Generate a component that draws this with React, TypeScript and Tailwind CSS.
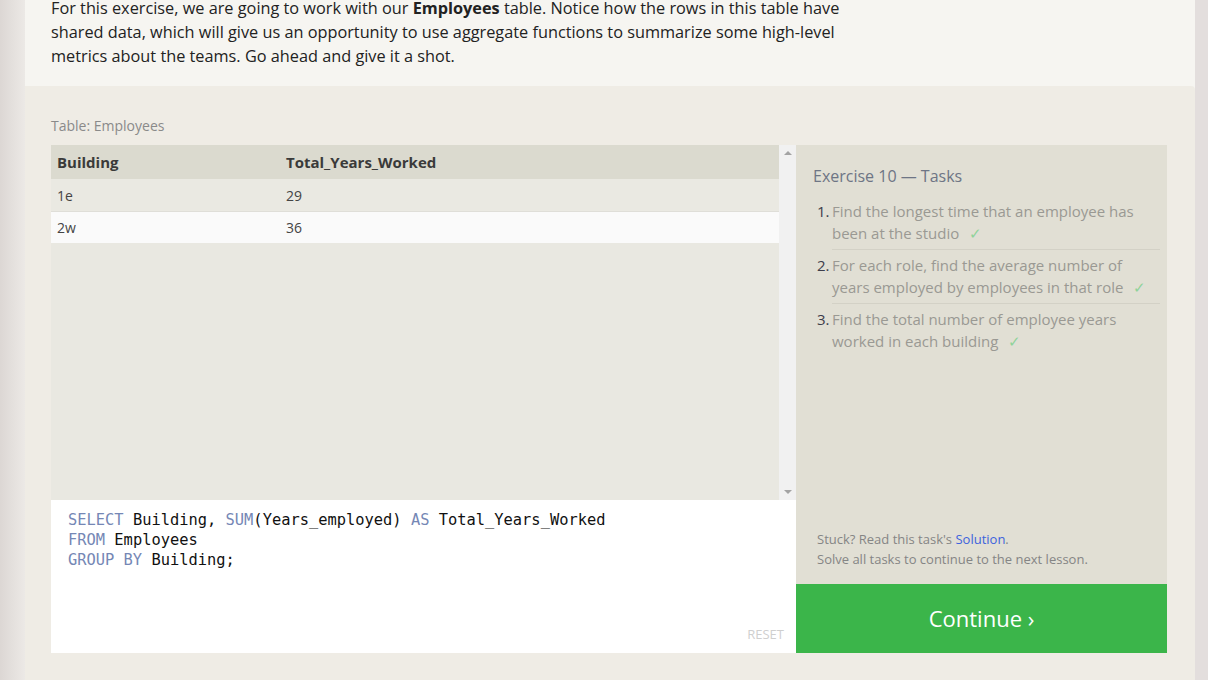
const tasks = [
  ["Find the longest time that an employee has", "been at the studio"],
  ["For each role, find the average number of", "years employed by employees in that role"],
  ["Find the total number of employee years", "worked in each building"],
];

const rows = [
  ["1e", "29"],
  ["2w", "36"],
];

const Kw = ({ children }: { children: React.ReactNode }) => (
  <span className="text-[#7587b5]">{children}</span>
);

export default function App() {
  return (
    <div
      className="flex h-[680px] w-[1208px] overflow-hidden bg-[#e4e0de] text-[#222]"
      style={{ fontFamily: '"Open Sans", "Noto Sans", sans-serif' }}
    >
      <div className="w-[25px] bg-gradient-to-r from-[#dcd7d4] to-[#ece9e6]" />

      <div className="flex w-[1170px] flex-col bg-[#f6f5f1]">
        {/* intro text */}
        <div className="h-[86px] px-[26px]">
          <p className="-mt-[4px] text-[16.3px] leading-[24px]">
            For this exercise, we are going to work with our <b>Employees</b> table. Notice how the rows in this table have
            <br />
            shared data, which will give us an opportunity to use aggregate functions to summarize some high-level
            <br />
            metrics about the teams. Go ahead and give it a shot.
          </p>
        </div>

        {/* exercise */}
        <div className="flex-1 rounded-tr-[4px] bg-[#efece5] px-[26px] pt-[30px]">
          <div className="mb-[9px] text-[14px] leading-[20px] text-[#8a8a8a]">Table: Employees</div>

          <div className="flex">
            <div className="flex w-[745px] flex-col">
              {/* results */}
              <div className="flex h-[355px]">
                <div className="flex-1 bg-[#e9e8e1]">
                  <div className="flex h-[34px] items-center bg-[#dbdacf] text-[15px] font-bold text-[#3a3a3a]">
                    <div className="w-[235px] pl-[6px]">Building</div>
                    <div>Total_Years_Worked</div>
                  </div>
                  {rows.map((r, i) => (
                    <div
                      key={r[0]}
                      className={
                        i === 0
                          ? "flex h-[33px] items-center border-b border-[#dfded8] bg-[#eae9e2] text-[14px] text-[#444]"
                          : "flex h-[31px] items-center bg-[#fafafa] text-[14px] text-[#444]"
                      }
                    >
                      <div className="w-[235px] pl-[6px]">{r[0]}</div>
                      <div>{r[1]}</div>
                    </div>
                  ))}
                </div>
                <div className="flex w-[17px] flex-col items-center justify-between bg-[#f1f1f1] py-[6px]">
                  <div className="h-0 w-0 border-x-[4px] border-b-[4px] border-x-transparent border-b-[#a3a3a3]" />
                  <div className="h-0 w-0 border-x-[4px] border-t-[4px] border-x-transparent border-t-[#a3a3a3]" />
                </div>
              </div>

              {/* editor */}
              <div className="relative h-[153px] bg-white pl-[17px] pt-[10px]">
                <pre
                  className="text-[15.4px] leading-[20px] text-[#111]"
                  style={{ fontFamily: '"DejaVu Sans Mono", "Liberation Mono", monospace' }}
                >
                  <Kw>SELECT</Kw> Building, <Kw>SUM</Kw>(Years_employed) <Kw>AS</Kw> Total_Years_Worked
                  {"\n"}
                  <Kw>FROM</Kw> Employees
                  {"\n"}
                  <Kw>GROUP BY</Kw> Building;
                </pre>
                <div className="absolute bottom-[11px] right-[12px] text-[13px] leading-[16px] text-[#cfcfcf]">RESET</div>
              </div>
            </div>

            {/* tasks */}
            <div className="flex w-[371px] flex-col">
              <div className="flex h-[439px] flex-col bg-[#e1dfd4] pl-[17px] pr-[7px] pt-[20px]">
                <div className="text-[16px] leading-[22px] text-[#6e7585]">Exercise 10 — Tasks</div>
                <div className="mt-[13px] pl-[4px]">
                  {tasks.map((t, i) => (
                    <div key={i} className={i === 0 ? "flex text-[15px] leading-[22px]" : "flex pt-[4px] text-[15px] leading-[22px]"}>
                      <div className="w-[15px] text-[#3d3d4a]">{i + 1}.</div>
                      <div
                        className={
                          i < 2
                            ? "flex-1 border-b border-[#d3d1c6] pb-[5px] text-[#9a9993]"
                            : "flex-1 text-[#9a9993]"
                        }
                      >
                        {t[0]}
                        <br />
                        {t[1]}
                        <span className="ml-[10px] text-[#8fd39a]">✓</span>
                      </div>
                    </div>
                  ))}
                </div>
                <div className="mt-auto pb-[15px] pl-[4px] text-[13px] leading-[20px] text-[#858585]">
                  Stuck? Read this task's <span className="text-[#3d63dd]">Solution</span>.
                  <br />
                  Solve all tasks to continue to the next lesson.
                </div>
              </div>
              <button className="flex h-[69px] items-center justify-center bg-[#3bb54a] text-[22px] text-white">
                Continue ›
              </button>
            </div>
          </div>
        </div>
      </div>

      <div className="w-[13px] bg-[#e3dedd]" />
    </div>
  );
}
